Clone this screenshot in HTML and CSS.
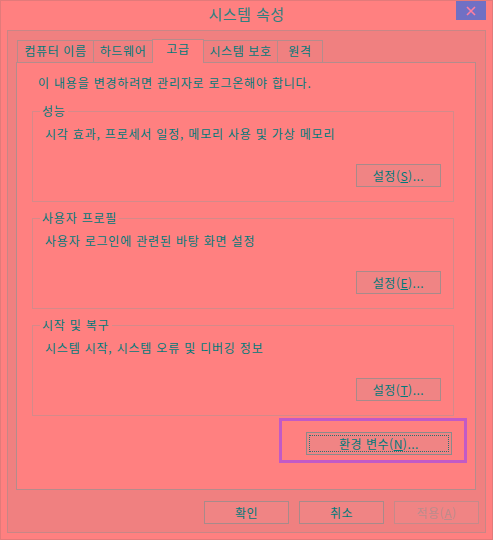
FILE: index.html
```html
<!DOCTYPE html>
<html lang="ko">
<head>
<meta charset="utf-8">
<title>시스템 속성</title>
<link rel="stylesheet" href="styles.css">
</head>
<body>
<div class="window">
  <div class="titlebar">
    <span class="spacer"></span>
    <span class="title">시스템 속성</span>
    <button class="close" aria-label="닫기">
      <svg width="10" height="10" viewBox="0 0 10 10"><path d="M1 1L9 9M9 1L1 9" stroke="#ff7fa0" stroke-width="1.6"/></svg>
    </button>
  </div>
  <div class="client">
    <div class="tabs">
      <div class="tab t1">컴퓨터 이름</div>
      <div class="tab t2">하드웨어</div>
      <div class="tab t3 active">고급</div>
      <div class="tab t4">시스템 보호</div>
      <div class="tab t5">원격</div>
    </div>
    <div class="panel">
      <p class="notice">이 내용을 변경하려면 관리자로 로그온해야 합니다.</p>
      <fieldset class="group">
        <legend>성능</legend>
        <p class="desc">시각 효과, 프로세서 일정, 메모리 사용 및 가상 메모리</p>
        <div class="row"><button class="btn">설정(<u>S</u>)...</button></div>
      </fieldset>
      <fieldset class="group">
        <legend>사용자 프로필</legend>
        <p class="desc">사용자 로그인에 관련된 바탕 화면 설정</p>
        <div class="row"><button class="btn">설정(<u>E</u>)...</button></div>
      </fieldset>
      <fieldset class="group">
        <legend>시작 및 복구</legend>
        <p class="desc">시스템 시작, 시스템 오류 및 디버깅 정보</p>
        <div class="row"><button class="btn">설정(<u>T</u>)...</button></div>
      </fieldset>
      <div class="env-row">
        <div class="highlight">
          <button class="btn env"><span class="focus">환경 변수(<u>N</u>)...</span></button>
        </div>
      </div>
    </div>
    <div class="actions">
      <button class="btn wide">확인</button>
      <button class="btn wide">취소</button>
      <button class="btn wide disabled">적용(<u>A</u>)</button>
    </div>
  </div>
</div>
</body>
</html>
```
FILE: styles.css
```css
* { box-sizing: border-box; }
html, body { margin: 0; padding: 0; }
body {
  width: 493px;
  height: 540px;
  background: #ff8080;
  font-family: "Noto Sans CJK KR", "Noto Sans", sans-serif;
  font-size: 12px;
  letter-spacing: 0.8px;
  color: #007a7a;
  overflow: hidden;
}
.window {
  width: 493px;
  height: 540px;
  border: 1px solid #e27a7a;
  display: flex;
  flex-direction: column;
}
.titlebar {
  height: 29px;
  display: grid;
  grid-template-columns: 1fr auto 1fr;
  align-items: start;
}
.title {
  font-size: 15px;
  letter-spacing: 0.5px;
  line-height: 26px;
  color: #2f8080;
}
.close {
  justify-self: end;
  margin-right: 6px;
  width: 30px;
  height: 19px;
  border: 0;
  padding: 0;
  background: #7070c4;
  display: flex;
  align-items: center;
  justify-content: center;
}
.client {
  flex: 1;
  margin: 0 6px 6px 6px;
  border: 1px solid #c88686;
  background: #f08080;
  display: flex;
  flex-direction: column;
}
.tabs {
  display: flex;
  align-items: flex-end;
  margin: 8px 0 0 9px;
  height: 23px;
  position: relative;
  z-index: 1;
}
.tab {
  height: 22px;
  border: 1px solid #b48c8c;
  border-bottom: 0;
  background: #f08080;
  line-height: 20px;
  text-align: center;
  margin-left: -1px;
  white-space: nowrap;
  letter-spacing: 0.6px;
}
.t1 { width: 77px; margin-left: 0; }
.t2 { width: 60px; }
.t3 { width: 52px; }
.t4 { width: 75px; }
.t5 { width: 46px; }
.tab.active {
  height: 24px;
  background: #ff8080;
  line-height: 18px;
  margin-bottom: -1px;
}
.panel {
  margin: 0 9px 0 8px;
  height: 428px;
  border: 1px solid #b48c8c;
  background: #ff8080;
  padding: 0 21px 0 15px;
  display: flex;
  flex-direction: column;
}
.notice {
  margin: 12px 0 0 6px;
  line-height: 16px;
}
.group {
  margin: 12px 0 0 0;
  padding: 0 12px 14px 7px;
  border: 1px solid #d48a8a;
  min-width: 0;
}
.group + .group { margin-top: 8px; }
.group legend {
  padding: 0 2px;
  line-height: 16px;
}
.desc {
  margin: 7px 0 0 5px;
  line-height: 16px;
}
.row {
  display: flex;
  justify-content: flex-end;
  margin-top: 22px;
}
.btn {
  font: inherit;
  letter-spacing: 0.5px;
  color: #007a7a;
  background: #f08484;
  border: 1px solid #a88a8a;
  height: 23px;
  width: 85px;
  padding: 0;
  line-height: 20px;
}
.btn u { text-decoration: underline; }
.env-row {
  display: flex;
  justify-content: flex-end;
  margin: 2px -13px 0 0;
}
.highlight {
  width: 188px;
  height: 45px;
  border: 3px solid #c25ac6;
  padding: 11px 0 0 24px;
}
.btn.env {
  width: 146px;
  height: 23px;
  border: 1px solid #8c8a8a;
  padding: 2px;
}
.focus {
  display: block;
  height: 17px;
  line-height: 15px;
  border: 1px dotted #2a7070;
}
.actions {
  display: flex;
  justify-content: flex-end;
  gap: 10px;
  margin-top: 11px;
  padding-right: 6px;
}
.btn.disabled {
  color: #bb8c8c;
  border-color: #c48a8a;
}
```
